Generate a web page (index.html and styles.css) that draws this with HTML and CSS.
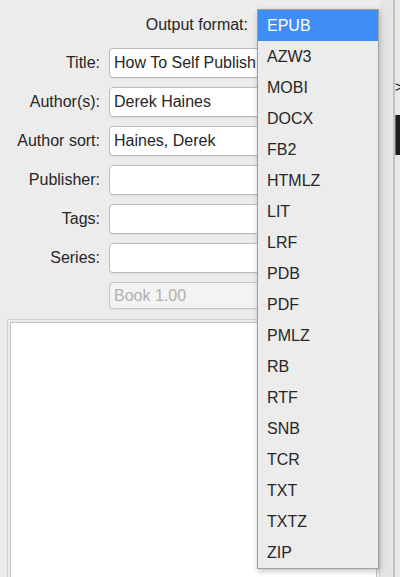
FILE: index.html
```html
<!DOCTYPE html>
<html>
<head>
<meta charset="utf-8">
<link rel="stylesheet" href="styles.css">
</head>
<body>
<div class="window">
  <div class="main">
    <div class="format-row">
      <span class="label">Output format:</span>
      <div class="combo"></div>
    </div>
    <div class="fields">
      <span class="label">Title:</span><div class="input"><span class="clip">How To Self Publish Your Book</span></div>
      <span class="label">Author(s):</span><div class="input">Derek Haines</div>
      <span class="label">Author sort:</span><div class="input">Haines, Derek</div>
      <span class="label">Publisher:</span><div class="input"></div>
      <span class="label">Tags:</span><div class="input"></div>
      <span class="label">Series:</span><div class="input"></div>
      <span class="label"></span><div class="input spin">Book 1.00</div>
    </div>
    <div class="comments"><div class="comments-inner"></div></div>
  </div>
  <div class="side">
    <span class="chev">&gt;</span>
    <div class="cover"></div>
  </div>
  <ul class="menu">
    <li class="active">EPUB</li>
    <li>AZW3</li>
    <li>MOBI</li>
    <li>DOCX</li>
    <li>FB2</li>
    <li>HTMLZ</li>
    <li>LIT</li>
    <li>LRF</li>
    <li>PDB</li>
    <li>PDF</li>
    <li>PMLZ</li>
    <li>RB</li>
    <li>RTF</li>
    <li>SNB</li>
    <li>TCR</li>
    <li>TXT</li>
    <li>TXTZ</li>
    <li>ZIP</li>
  </ul>
</div>
</body>
</html>
```

FILE: styles.css
```css
html, body {
  margin: 0;
  padding: 0;
  background: #ececec;
  overflow: hidden;
}
body {
  font-family: "Liberation Sans", Arial, sans-serif;
  font-size: 16px;
  color: #262626;
}
.window {
  position: relative;
  display: flex;
  width: 400px;
  height: 577px;
  overflow: hidden;
}
.main {
  width: 380px;
  padding-top: 10px;
  flex: none;
}
.format-row {
  display: flex;
  align-items: center;
  height: 30px;
  margin-bottom: 8px;
  gap: 9px;
}
.format-row .label {
  width: 248px;
  text-align: right;
}
.combo {
  width: 120px;
  height: 26px;
}
.fields {
  display: grid;
  grid-template-columns: 100px 269px;
  grid-template-rows: repeat(6, 30px) 27px;
  column-gap: 9px;
  row-gap: 9px;
}
.label {
  text-align: right;
  align-self: center;
  white-space: nowrap;
}
.input {
  box-sizing: border-box;
  height: 30px;
  background: #fff;
  border: 1px solid #bcbcbc;
  border-radius: 4px;
  padding: 0 4px;
  line-height: 28px;
  white-space: nowrap;
  overflow: hidden;
  box-shadow: 0 1px 1px rgba(0,0,0,0.06);
}
.clip {
  display: inline-block;
  max-width: 143px;
  overflow: hidden;
  vertical-align: top;
}
.input.spin {
  height: 27px;
  line-height: 25px;
  background: #f3f3f3;
  color: #b0b0b0;
  border-color: #c6c6c6;
  align-self: start;
}
.comments {
  margin: 10px 0 0 7px;
  height: 300px;
  border: 1px solid #d2d2d2;
  padding: 2px;
  background: #ececec;
}
.comments-inner {
  height: 100%;
  background: #fff;
  border: 1px solid #c4c4c4;
  box-sizing: border-box;
}
.side {
  flex: 1;
  display: flex;
  flex-direction: column;
  align-items: flex-start;
  padding-left: 13px;
  background: linear-gradient(to right, #e5e5e5 0, #e5e5e5 13px, #c2c2c2 13px, #c2c2c2 15px, #e8e8e8 15px);
}
.chev {
  margin: 79px 0 0 2px;
  font-size: 14px;
  line-height: 16px;
  color: #222;
}
.cover {
  margin: 20px 0 0 2px;
  width: 8px;
  height: 40px;
  background: #1c1c1c;
  border-left: 1px solid #666;
}
.menu {
  position: absolute;
  left: 257px;
  top: 9px;
  width: 120px;
  margin: 0;
  padding: 0;
  list-style: none;
  background: #ececec;
  border: 1px solid #9f9f9f;
  box-shadow: 1px 2px 6px rgba(0,0,0,0.25);
}
.menu li {
  height: 31px;
  line-height: 31px;
  padding-left: 9px;
  color: #262626;
}
.menu li.active {
  background: #3f8ef7;
  color: #fff;
}
```
